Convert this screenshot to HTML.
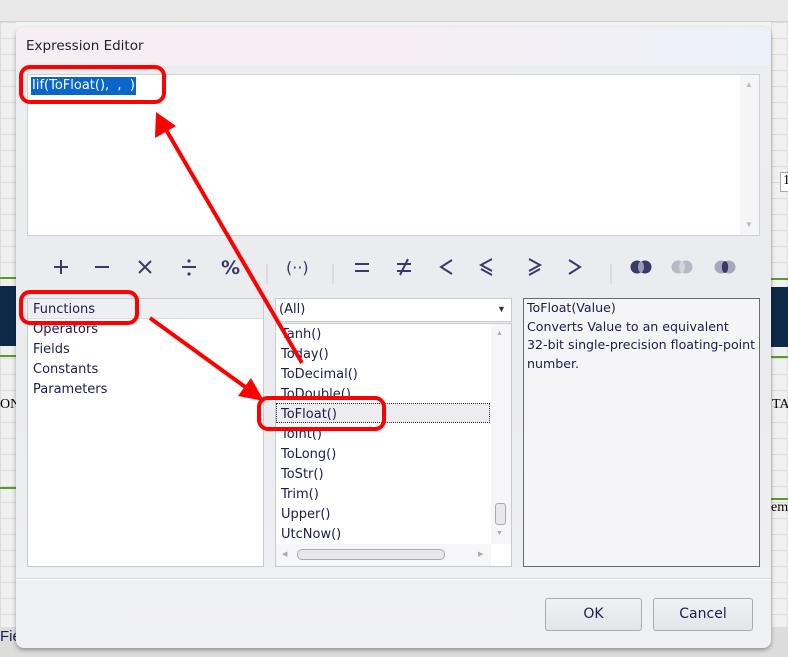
<!DOCTYPE html>
<html><head><meta charset="utf-8"><style>
*{margin:0;padding:0;box-sizing:border-box}
body{width:788px;height:657px;position:relative;overflow:hidden;background:#f3f3f3;font-family:"Liberation Sans","DejaVu Sans",sans-serif;font-size:14px;color:#1e1e3c}
.a{position:absolute}
.grid{background-color:#f0f0f0;background-image:linear-gradient(#dcdcdc 1px,transparent 1px),linear-gradient(90deg,#dcdcdc 1px,transparent 1px);background-size:16px 16px}
.t{font-family:"DejaVu Sans",sans-serif;font-size:13px;color:#1c1c50;line-height:20px}
</style></head><body>
<div class="a" style="left:0;top:0;width:788px;height:22px;background:#e9e9e9;border-bottom:1px solid #d0d0d0"></div>
<div class="a grid" style="left:0;top:22px;width:16px;height:626px"></div>
<div class="a grid" style="left:771px;top:22px;width:17px;height:626px"></div>
<div class="a" style="left:0;top:277px;width:16px;height:2px;background:#5a9a2a"></div>
<div class="a" style="left:0;top:286px;width:16px;height:60px;background:#0d2a4a"></div>
<div class="a" style="left:0;top:355px;width:16px;height:2px;background:#5a9a2a"></div>
<div class="a" style="left:0;top:487px;width:16px;height:2px;background:#5a9a2a"></div>
<div class="a" style="left:0;top:397px;font-family:'Liberation Serif';font-size:14px;color:#000">ON</div>
<div class="a" style="left:771px;top:278px;width:17px;height:2px;background:#5a9a2a"></div>
<div class="a" style="left:771px;top:287px;width:17px;height:60px;background:#0d2a4a"></div>
<div class="a" style="left:771px;top:356px;width:17px;height:2px;background:#5a9a2a"></div>
<div class="a" style="left:771px;top:498px;width:17px;height:2px;background:#5a9a2a"></div>
<div class="a" style="left:772px;top:397px;font-family:'Liberation Serif';font-size:14px;color:#000">TAT</div>
<div class="a" style="left:771px;top:500px;font-family:'Liberation Serif';font-size:14px;color:#000">em</div>
<div class="a" style="left:780px;top:172px;width:10px;height:20px;border:1px solid #aaa;background:#fff;font-family:'Liberation Serif';font-size:14px;padding-left:2px;color:#000">1</div>
<div class="a" style="left:0;top:627px;width:788px;height:30px;background:#dcdcdc"></div>
<div class="a" style="left:0;top:628px;font-size:15px;color:#1c1c50">Fie</div>
<div class="a" style="left:16px;top:27px;width:755px;height:621px;border-radius:8px;background:linear-gradient(#ebedf1 0,#ebecf0 60%,#f0f1f4 100%);box-shadow:0 2px 4px rgba(0,0,0,.35);overflow:hidden">
 <div class="a" style="left:0;top:0;width:755px;height:38px;background:linear-gradient(90deg,#f7eef3,#f6eef4 50%,#ecf1f8)"></div>
 <div class="a" style="left:10px;top:11px;font-family:'DejaVu Sans';font-size:13.5px;color:#222">Expression Editor</div>
</div>
<div class="a" style="left:27px;top:74px;width:733px;height:162px;background:#fff;border:1px solid #cfd1d6"></div>
<div class="a" style="left:740px;top:75px;width:19px;height:160px;background:#f5f5f7"></div>
<div class="a" style="left:745px;top:80px;font-size:8px;color:#bbb">▲</div>
<div class="a" style="left:745px;top:220px;font-size:8px;color:#bbb">▼</div>
<div class="a t" style="left:31px;top:77px;background:#0a66c8;color:#fff;padding:0 1px;line-height:18px">Iif(ToFloat(),&nbsp; ,&nbsp; )</div>
<svg class="a" style="left:0;top:250px" width="788" height="36">
<g stroke="#3a3a6a" stroke-width="2" fill="none">
<path d="M54 17h14M61 10v14"/><path d="M95 17h14"/><path d="M139 11l12 12M151 11l-12 12"/><path d="M182 17h14"/>
<path d="M355 14h14M355 21h14"/><path d="M397 14h14M397 21h14M408 9l-8 16"/>
<path d="M452 10l-11 7 11 7"/><path d="M492 9l-11 6 11 6M481 19l11 6"/>
<path d="M529 9l11 6-11 6M540 19l-11 6"/><path d="M569 10l11 7-11 7"/>
</g>
<circle cx="189" cy="11" r="1.6" fill="#3a3a6a"/><circle cx="189" cy="24" r="1.6" fill="#3a3a6a"/>
<text x="221" y="24" font-family="DejaVu Sans" font-size="19" font-weight="bold" fill="#3a3a6a">%</text>
<text x="286" y="23" font-family="DejaVu Sans" font-size="16" fill="#3a3a6a">(··)</text>
<line x1="267" y1="14" x2="267" y2="34" stroke="#c8c8cc"/><line x1="333" y1="14" x2="333" y2="34" stroke="#c8c8cc"/><line x1="611" y1="14" x2="611" y2="34" stroke="#c8c8cc"/>
<circle cx="637" cy="17" r="6.5" fill="#3a3a6a"/><circle cx="645" cy="17" r="6.5" fill="#3a3a6a"/><ellipse cx="641" cy="17" rx="3" ry="5.5" fill="#9a9ab0"/>
<circle cx="678" cy="17" r="6.5" fill="#b8b8c6"/><circle cx="686" cy="17" r="6.5" fill="#b8b8c6"/><ellipse cx="682" cy="17" rx="3" ry="5.5" fill="#d5d5de"/>
<circle cx="721" cy="17" r="6.5" fill="#a8a8ba"/><circle cx="729" cy="17" r="6.5" fill="#a8a8ba"/><ellipse cx="725" cy="17" rx="3.2" ry="6" fill="#3a3a6a"/>
</svg>
<div class="a" style="left:27px;top:298px;width:237px;height:269px;background:#fff;border:1px solid #c8cad0"></div>
<div class="a" style="left:28px;top:299px;width:235px;height:20px;background:#eeeff2;border-bottom:1px solid #ddd"></div>
<div class="a t" style="left:33px;top:300px">Functions<br>Operators<br>Fields<br>Constants<br>Parameters</div>
<div class="a" style="left:275px;top:298px;width:237px;height:24px;background:#fff;border:1px solid #c8cad0"></div>
<div class="a t" style="left:279px;top:300px">(All)</div>
<div class="a" style="left:497px;top:304px;font-size:9px;color:#333">▼</div>
<div class="a" style="left:275px;top:323px;width:237px;height:244px;background:#fff;border:1px solid #c8cad0"></div>
<div class="a" style="left:276px;top:403px;width:214px;height:20px;background:#ededf0;border:1px dotted #333"></div>
<div class="a t" style="left:281px;top:325px">Tanh()<br>Today()<br>ToDecimal()<br>ToDouble()<br>ToFloat()<br>ToInt()<br>ToLong()<br>ToStr()<br>Trim()<br>Upper()<br>UtcNow()</div>
<div class="a" style="left:491px;top:324px;width:20px;height:220px;background:#f6f6f8"></div>
<div class="a" style="left:496px;top:330px;font-size:7px;color:#aaa">▲</div>
<div class="a" style="left:496px;top:530px;font-size:7px;color:#aaa">▼</div>
<div class="a" style="left:495px;top:503px;width:11px;height:22px;border:1px solid #aaa;border-radius:3px;background:#e8e8ea"></div>
<div class="a" style="left:276px;top:544px;width:215px;height:22px;background:#f6f6f8"></div>
<div class="a" style="left:297px;top:549px;width:148px;height:11px;border:1px solid #aaa;border-radius:5px;background:#e8e8ea"></div>
<div class="a" style="left:282px;top:550px;font-size:7px;color:#aaa">◀</div>
<div class="a" style="left:478px;top:550px;font-size:7px;color:#aaa">▶</div>
<div class="a" style="left:523px;top:298px;width:237px;height:269px;background:#f5f5f7;border:1px solid #6a6a6a"></div>
<div class="a t" style="left:527px;top:299px;line-height:18.5px;font-size:12.6px;white-space:nowrap">ToFloat(Value)<br>Converts Value to an equivalent<br>32-bit single-precision floating-point<br>number.</div>
<div class="a" style="left:16px;top:578px;width:755px;height:1px;background:#d8d9de"></div>
<div class="a" style="left:16px;top:579px;width:755px;height:1px;background:#fff"></div>
<div class="a" style="left:545px;top:598px;width:97px;height:33px;border:1px solid #a9abb2;border-radius:3px;background:linear-gradient(#f0f1f3,#e4e5e9);text-align:center;line-height:31px;font-family:'DejaVu Sans';font-size:14px;color:#1c1c50">OK</div>
<div class="a" style="left:653px;top:598px;width:100px;height:33px;border:1px solid #a9abb2;border-radius:3px;background:linear-gradient(#f0f1f3,#e4e5e9);text-align:center;line-height:31px;font-family:'DejaVu Sans';font-size:14px;color:#1c1c50">Cancel</div>
<svg class="a" style="left:0;top:0" width="788" height="657">
<g fill="none" stroke="#f00" stroke-width="4">
<rect x="21" y="67" width="143" height="35" rx="9"/>
<rect x="21" y="292" width="116" height="31" rx="9"/>
<rect x="259" y="398" width="125" height="31" rx="9"/>
<line x1="302" y1="363" x2="165" y2="128"/>
<line x1="150" y1="318" x2="248" y2="389"/>
</g>
<polygon points="156,112 155,138 176,126" fill="#f00"/>
<polygon points="264,401 238,396 251,378" fill="#f00"/>
</svg>
</body></html>
